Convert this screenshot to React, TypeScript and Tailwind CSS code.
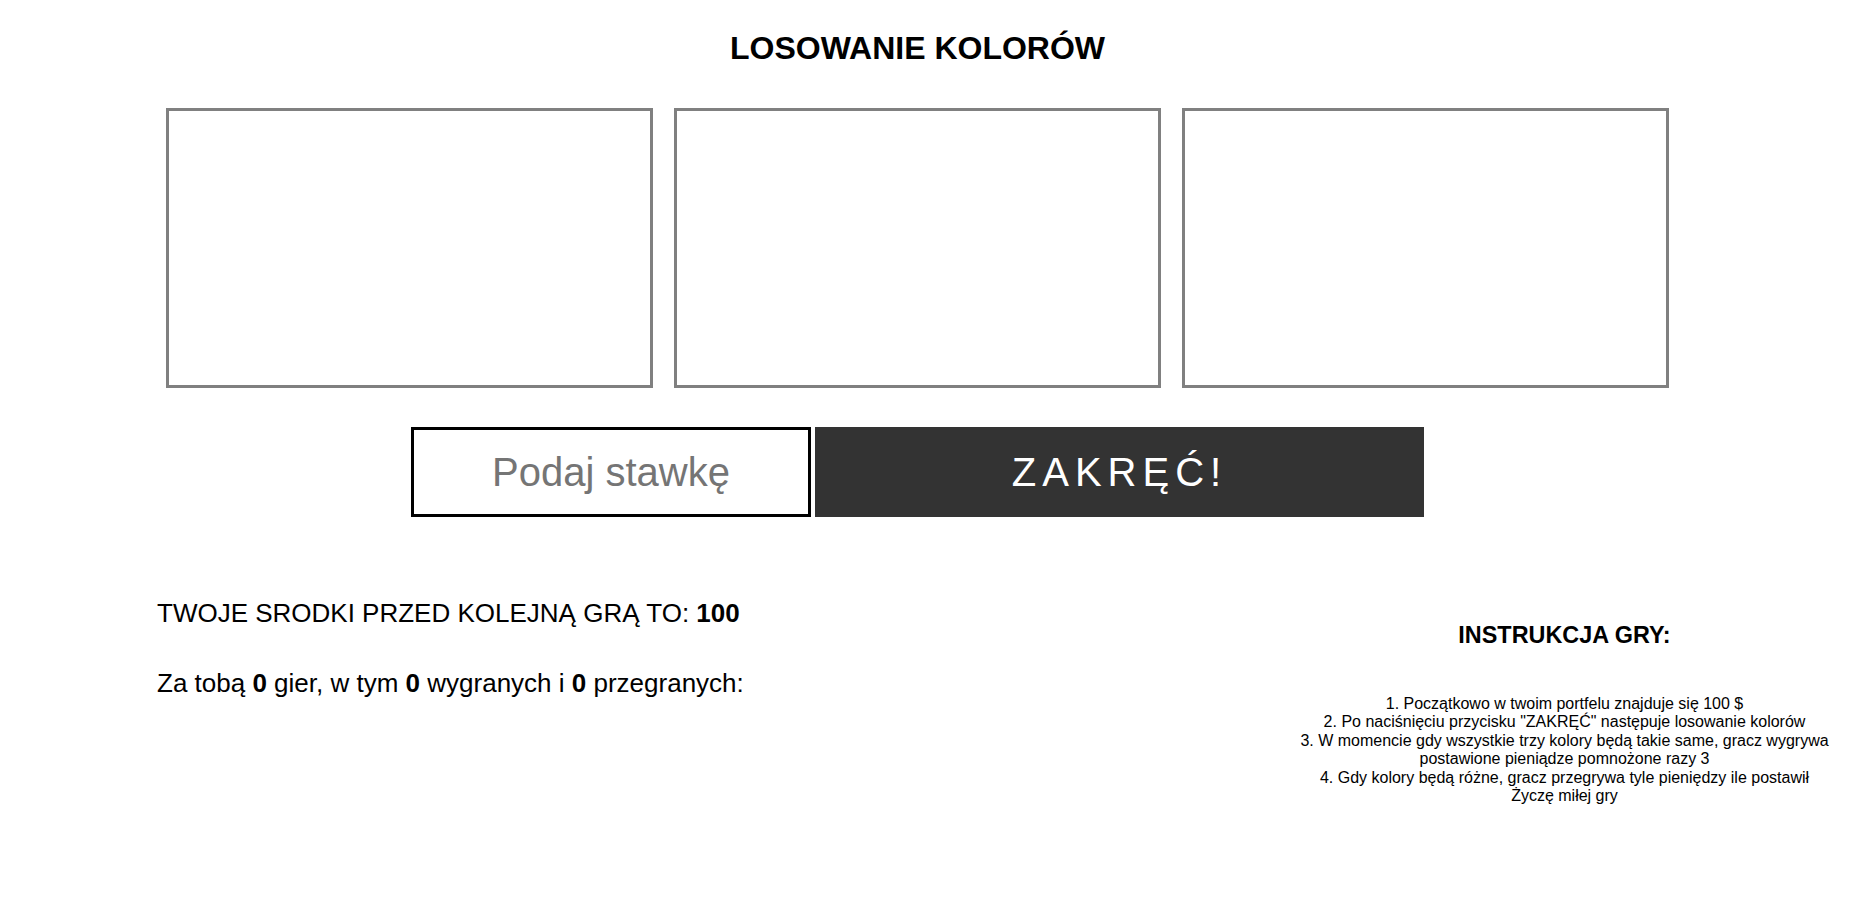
export default function App() {
  return (
    <div className="w-[1835px] min-h-[915px] bg-white text-black font-['Liberation_Sans',Arial,sans-serif]">
      {/* Title */}
      <h1 className="pt-[30px] text-center text-[32px] leading-[37px] font-bold">LOSOWANIE KOLORÓW</h1>

      {/* Color slots */}
      <div className="mt-[41px] flex justify-center gap-[21px]">
        <div className="w-[487px] h-[280px] border-[3px] border-[#808080]" />
        <div className="w-[487px] h-[280px] border-[3px] border-[#808080]" />
        <div className="w-[487px] h-[280px] border-[3px] border-[#808080]" />
      </div>

      {/* Stake + spin */}
      <div className="mt-[39px] flex justify-center gap-[4px]">
        <input
          placeholder="Podaj stawkę"
          className="w-[400px] h-[90px] border-[3px] border-black text-center text-[40px] placeholder:text-[#757575] outline-none"
        />
        <button className="w-[609px] h-[90px] bg-[#333333] text-white text-[40px] tracking-[6px]">ZAKRĘĆ!</button>
      </div>

      {/* Stats + instructions */}
      <div className="flex items-start">
        <div className="ml-[157px] mt-[81px] text-[26px] leading-[30px]">
          <p>
            TWOJE SRODKI PRZED KOLEJNĄ GRĄ TO: <b>100</b>
          </p>
          <p className="mt-[40px]">
            Za tobą <b>0</b> gier, w tym <b>0</b> wygranych i <b>0</b> przegranych:
          </p>
        </div>
        <div className="ml-auto w-[541px] mt-[104.5px] text-center">
          <h3 className="text-[23.4px] leading-[27px] font-bold">INSTRUKCJA GRY:</h3>
          <p className="mt-[46.5px] text-[16px] leading-[18.4px]">
            1. Początkowo w twoim portfelu znajduje się 100 $
            <br />
            2. Po naciśnięciu przycisku "ZAKRĘĆ" następuje losowanie kolorów
            <br />
            3. W momencie gdy wszystkie trzy kolory będą takie same, gracz wygrywa postawione pieniądze pomnożone razy 3
            <br />
            4. Gdy kolory będą różne, gracz przegrywa tyle pieniędzy ile postawił
            <br />
            Życzę miłej gry
          </p>
        </div>
      </div>
    </div>
  );
}
